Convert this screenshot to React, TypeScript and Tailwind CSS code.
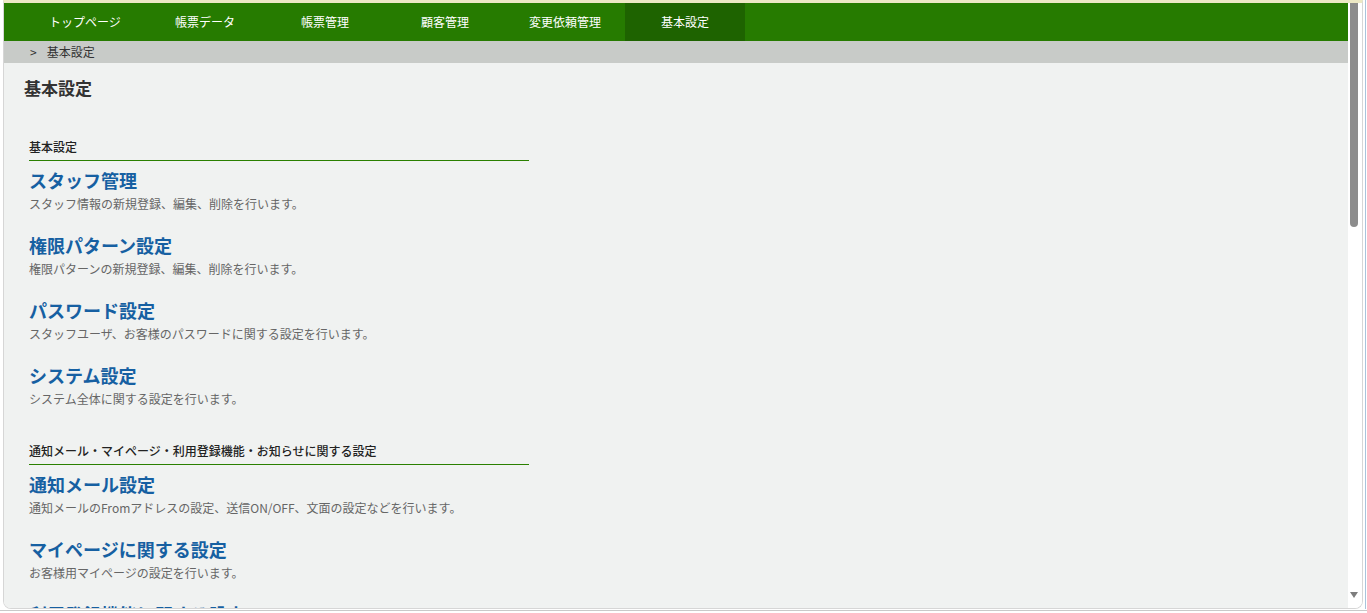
import React from "react";

const tabs = ["トップページ", "帳票データ", "帳票管理", "顧客管理", "変更依頼管理", "基本設定"];

type Item = { title: string; desc: string };

const sections: { label: string; items: Item[] }[] = [
  {
    label: "基本設定",
    items: [
      { title: "スタッフ管理", desc: "スタッフ情報の新規登録、編集、削除を行います。" },
      { title: "権限パターン設定", desc: "権限パターンの新規登録、編集、削除を行います。" },
      { title: "パスワード設定", desc: "スタッフユーザ、お客様のパスワードに関する設定を行います。" },
      { title: "システム設定", desc: "システム全体に関する設定を行います。" },
    ],
  },
  {
    label: "通知メール・マイページ・利用登録機能・お知らせに関する設定",
    items: [
      { title: "通知メール設定", desc: "通知メールのFromアドレスの設定、送信ON/OFF、文面の設定などを行います。" },
      { title: "マイページに関する設定", desc: "お客様用マイページの設定を行います。" },
      { title: "利用登録機能に関する設定", desc: "利用登録機能の設定を行います。" },
    ],
  },
];

export default function App() {
  return (
    <div
      className="w-[1367px] h-[613px] bg-white overflow-hidden relative"
      style={{ fontFamily: '"Noto Sans CJK JP", "Noto Sans", sans-serif' }}
    >
      <div className="h-[611px] border-b border-[#c9c9c9]">
        <div className="ml-[3px] w-[1360px] h-[609px] flex border-l border-r border-b border-[#d6d6d6] rounded-b-[8px] border-t-[3px] border-t-[#ece8c4] overflow-hidden">
          {/* main */}
          <div className="w-[1344px] flex flex-col bg-[#f0f2f1] overflow-hidden">
            <div className="h-[38px] shrink-0 bg-[#267b00] flex pl-[21px]">
              {tabs.map((t, i) => (
                <div
                  key={t}
                  className={`w-[120px] flex items-center justify-center text-[12px] text-white ${
                    i === tabs.length - 1 ? "bg-[#1e6300]" : ""
                  }`}
                >
                  {t}
                </div>
              ))}
            </div>
            <div className="h-[22px] shrink-0 bg-[#c8cbc8] flex items-center pl-[26px] text-[12px] text-[#333]">
              <span className="mr-[10px]">&gt;</span>
              <span>基本設定</span>
            </div>
            <div className="pl-[20px] mt-[13px]">
              <h1 className="text-[17px] leading-[24px] font-bold text-[#333]">基本設定</h1>
            </div>
            <div className="pl-[25px] mt-[38px]">
              {sections.map((s, si) => (
                <div key={s.label} className={si > 0 ? "mt-[34px]" : ""}>
                  <div className="w-[500px] border-b border-[#2a8000] pb-[4px] text-[12px] leading-[18px] text-[#222] font-medium">
                    {s.label}
                  </div>
                  <div className="mt-[7px]">
                    {s.items.map((it) => (
                      <div key={it.title} className="mb-[20px]">
                        <div className="text-[18px] leading-[24px] font-bold text-[#1660a2]">{it.title}</div>
                        <div className="mt-[3px] text-[12px] leading-[18px] text-[#666]">{it.desc}</div>
                      </div>
                    ))}
                  </div>
                </div>
              ))}
            </div>
          </div>
          {/* scrollbar */}
          <div className="w-[14px] bg-white relative">
            <div className="absolute left-[2px] top-[-3px] w-[8px] h-[227px] bg-[#8c8c8c] rounded-b-[4px]" />
            <svg className="absolute left-[2px] top-[589px]" width="8" height="6" viewBox="0 0 8 6">
              <polygon points="0,0 8,0 4,6" fill="#7d7d7d" />
            </svg>
          </div>
        </div>
      </div>
      <div className="absolute right-[1px] top-0 w-[1px] h-[609px] bg-[#a9c4dc]" />
    </div>
  );
}
